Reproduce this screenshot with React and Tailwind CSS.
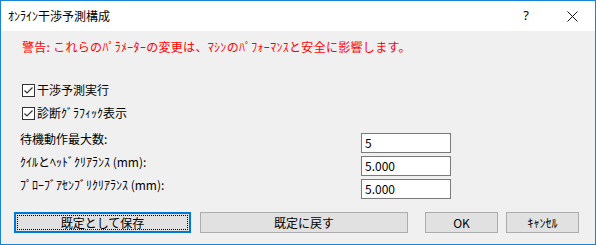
const jp = { fontFamily: '"Noto Sans CJK JP", "Noto Sans", sans-serif' };

const CheckBox = ({ label }) => (
  <label className="flex items-center h-[16px] ml-[21px] text-[12px] leading-[16px] text-black">
    <span className="w-[13px] h-[13px] border border-[#333333] bg-white flex items-center justify-center">
      <svg width="11" height="11" viewBox="0 0 11 11">
        <polyline points="1.5,5.5 4,8 9.5,2.5" fill="none" stroke="#333333" strokeWidth="1.2" />
      </svg>
    </span>
    <span className="ml-[2px]">{label}</span>
  </label>
);

const Field = ({ label, value }) => (
  <div className="flex items-start h-[20px]">
    <span className="w-[360px] pl-[19px] text-[12px] leading-[14px] -mt-px text-black">{label}</span>
    <div className="w-[90px] h-[20px] border border-[#7a7a7a] bg-white pl-[3px] flex items-center text-[12px] text-black">
      {value}
    </div>
  </div>
);

const Button = ({ label, className = "", isDefault }) => (
  <button
    className={
      "h-[21px] bg-[#e1e1e1] text-[12px] leading-none text-black flex items-center justify-center " +
      (isDefault ? "border-2 border-[#0078d7] p-px " : "border border-[#adadad] ") +
      className
    }
  >
    {isDefault ? (
      <span className="w-full h-full border border-dotted border-black flex items-center justify-center">{label}</span>
    ) : (
      label
    )}
  </button>
);

export default function App() {
  return (
    <div className="w-[596px] h-[245px] border border-[#1883d7] bg-[#f0f0f0] flex flex-col" style={jp}>
      <div className="h-[30px] bg-white flex items-center">
        <span className="flex-1 pl-[7px] text-[12px] text-black">ｵﾝﾗｲﾝ干渉予測構成</span>
        <div className="w-[46px] h-full flex items-center justify-center text-[13px] text-black" style={{ fontFamily: '"Noto Sans", sans-serif' }}>
          ?
        </div>
        <div className="w-[46px] h-full flex items-center justify-center">
          <svg width="11" height="11" viewBox="0 0 11 11">
            <path d="M0.5 0.5 L10.5 10.5 M10.5 0.5 L0.5 10.5" stroke="#111111" strokeWidth="1" />
          </svg>
        </div>
      </div>

      <div className="flex flex-col pt-[8px]">
        <p className="ml-[21px] text-[12px] leading-[16px] tracking-[0.3px] text-[#ff0000]">
          警告: これらのﾊﾟﾗﾒｰﾀｰの変更は、ﾏｼﾝのﾊﾟﾌｫｰﾏﾝｽと安全に影響します。
        </p>

        <div className="mt-[27px] flex flex-col gap-[7px]">
          <CheckBox label="干渉予測実行" />
          <CheckBox label="診断ｸﾞﾗﾌｨｯｸ表示" />
        </div>

        <div className="mt-[12px] flex flex-col gap-[3px]">
          <Field label="待機動作最大数:" value="5" />
          <Field label="ｸｲﾙとﾍｯﾄﾞｸﾘｱﾗﾝｽ (mm):" value="5.000" />
          <Field label="ﾌﾟﾛｰﾌﾞｱｾﾝﾌﾞﾘｸﾘｱﾗﾝｽ (mm):" value="5.000" />
        </div>

        <div className="mt-[13px] flex pl-[13px]">
          <Button label="既定として保存" className="w-[177px]" isDefault />
          <Button label="既定に戻す" className="w-[208px] ml-[9px]" />
          <Button label="OK" className="w-[73px] ml-[17px]" />
          <Button label="ｷｬﾝｾﾙ" className="w-[73px] ml-[8px]" />
        </div>
      </div>
    </div>
  );
}
